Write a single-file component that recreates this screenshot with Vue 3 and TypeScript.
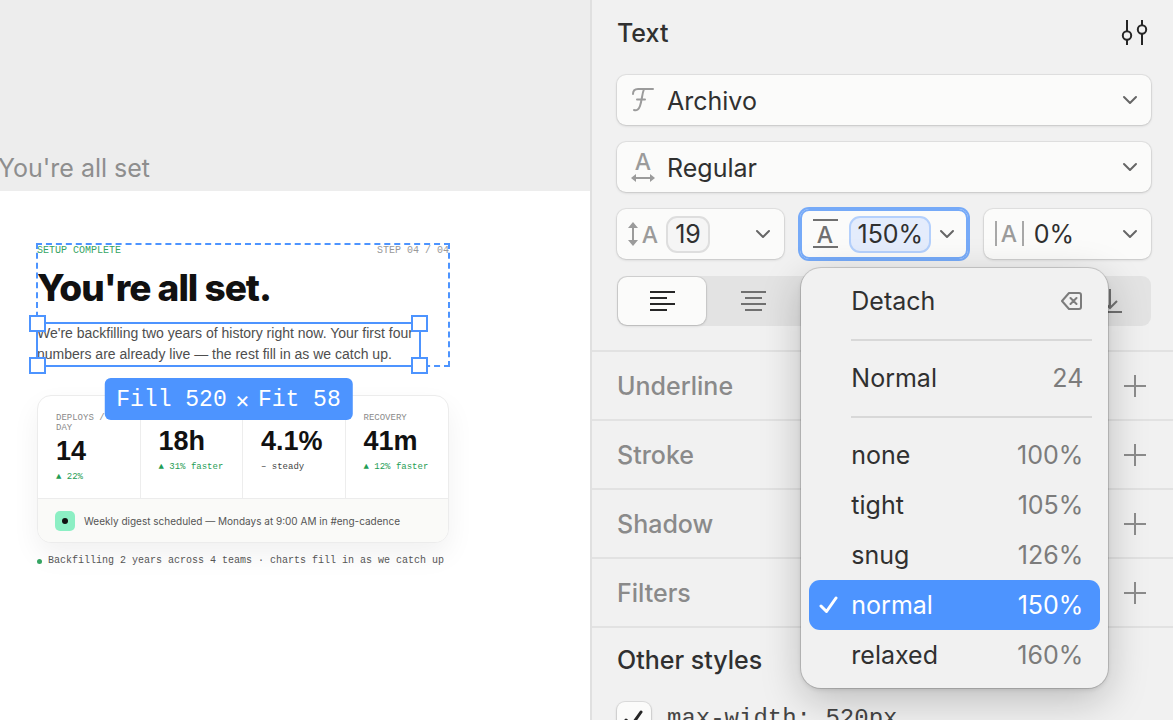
<script setup lang="ts">
import { ref } from 'vue'

interface Stat {
  label: string
  value: string
  delta: string
  up: boolean
}

interface Preset {
  name: string
  value: string
}

const stats: Stat[] = [
  { label: 'Deploys / day', value: '14', delta: '▲ 22%', up: true },
  { label: 'Lead time', value: '18h', delta: '▲ 31% faster', up: true },
  { label: 'Fail rate', value: '4.1%', delta: '– steady', up: false },
  { label: 'Recovery', value: '41m', delta: '▲ 12% faster', up: true },
]

const presets: Preset[] = [
  { name: 'none', value: '100%' },
  { name: 'tight', value: '105%' },
  { name: 'snug', value: '126%' },
  { name: 'normal', value: '150%' },
  { name: 'relaxed', value: '160%' },
]

const sections: string[] = ['Underline', 'Stroke', 'Shadow', 'Filters']

const horizontal = [
  { name: 'left', d: 'M1 2H26M1 8H18M1 14H26M1 20H18' },
  { name: 'center', d: 'M1 2H26M5 8H22M1 14H26M5 20H22' },
  { name: 'right', d: 'M1 2H26M9 8H26M1 14H26M9 20H26' },
]
const vertical = [
  { name: 'top', d: 'M1 1H25M13 23V6M6 12L13 5L20 12' },
  { name: 'middle', d: 'M1 12H25M13 0V8M13 24V16' },
  { name: 'bottom', d: 'M1 23H25M13 0V18M6 12L13 19L20 12' },
]

const align = ref('left')
const family = ref('Archivo')
const weight = ref('Regular')
const fontSize = ref('19')
const lineHeight = ref('150%')
const tracking = ref('0%')
const maxWidthOn = ref(true)
</script>

<template>
  <div class="app">
    <main class="canvas">
      <p class="frame-name">You're all set</p>
      <article class="frame">
        <header class="intro">
          <div class="eyebrow">
            <span class="done">SETUP COMPLETE</span>
            <span class="step">STEP 04 / 04</span>
          </div>
          <h1>You're all set.</h1>
          <div class="lead">
            <p>We're backfilling two years of history right now. Your first four numbers are already live — the rest fill in as we catch up.</p>
            <div class="selection">
              <i class="handle tl"></i><i class="handle tr"></i>
              <i class="handle bl"></i><i class="handle br"></i>
            </div>
            <div class="size-badge"><span>Fill 520</span><span class="times">×</span><span>Fit 58</span></div>
          </div>
          <div class="parent-outline"></div>
        </header>

        <section class="card">
          <div class="stats">
            <div v-for="s in stats" :key="s.label" class="stat">
              <span class="stat-label">{{ s.label }}</span>
              <strong>{{ s.value }}</strong>
              <span class="delta" :class="{ up: s.up }">{{ s.delta }}</span>
            </div>
          </div>
          <div class="digest">
            <span class="digest-icon"></span>
            <span>Weekly digest scheduled — Mondays at 9:00 AM in #eng-cadence</span>
          </div>
        </section>
        <p class="status"><i></i>Backfilling 2 years across 4 teams · charts fill in as we catch up</p>
      </article>
    </main>

    <aside class="inspector">
      <section class="text-section">
        <div class="section-head">
          <h2>Text</h2>
          <button class="plain" aria-label="Text settings">
            <svg width="28" height="28" viewBox="0 0 28 28" fill="none" stroke="#262626" stroke-width="2">
              <path d="M6 1V12M6 21V26M21 1V6M21 15V26" />
              <circle cx="6" cy="16.500" r="4.200" /><circle cx="21" cy="10.500" r="4.200" />
            </svg>
          </button>
        </div>

        <div class="field">
          <svg class="lead-icon" width="26" height="28" viewBox="0 0 26 28" fill="none" stroke="#9b9b9b" stroke-width="2" stroke-linecap="round" stroke-linejoin="round">
            <path d="M3 8C3 5 5 3 8 3H23M14 3C12 8 12 14 10 20C9 23 7 25 4 24M7 13.500H15" />
          </svg>
          <select v-model="family" aria-label="Font family">
            <option>Archivo</option>
          </select>
          <svg class="chevron" width="16" height="10" viewBox="0 0 16 10"><path d="M2 2L8 8L14 2" /></svg>
        </div>

        <div class="field">
          <svg class="lead-icon" width="26" height="32" viewBox="0 0 26 32" fill="none" stroke="#9b9b9b" stroke-width="2">
            <text x="13" y="19" class="glyph light">A</text>
            <path d="M5 27H21" />
            <path d="M1 27L6 23V31ZM25 27L20 23V31Z" fill="#9b9b9b" stroke="none" />
          </svg>
          <select v-model="weight" aria-label="Font weight">
            <option>Regular</option>
          </select>
          <svg class="chevron" width="16" height="10" viewBox="0 0 16 10"><path d="M2 2L8 8L14 2" /></svg>
        </div>

        <div class="metrics">
          <div class="field">
            <svg class="metric-icon" width="32" height="28" viewBox="0 0 32 28" fill="none" stroke="#9b9b9b" stroke-width="2">
              <path d="M6 6V22" />
              <path d="M6 2L1 8H11ZM6 26L1 20H11Z" fill="#9b9b9b" stroke="none" />
              <text x="23" y="23" class="glyph light">A</text>
            </svg>
            <input v-model="fontSize" class="token size" aria-label="Font size" />
            <button class="plain chevron-button" aria-label="Font size presets">
              <svg width="16" height="10" viewBox="0 0 16 10"><path d="M2 2L8 8L14 2" /></svg>
            </button>
          </div>

          <div class="field active">
            <svg class="metric-icon" width="28" height="32" viewBox="0 0 28 32" fill="none" stroke="#707070" stroke-width="2">
              <path d="M1 2H26M1 29H26" />
              <text x="13" y="25" class="glyph dark">A</text>
            </svg>
            <input v-model="lineHeight" class="token leading" aria-label="Line height" />
            <button class="plain chevron-button" aria-label="Line height presets" aria-expanded="true">
              <svg width="16" height="10" viewBox="0 0 16 10"><path d="M2 2L8 8L14 2" /></svg>
            </button>

            <div class="menu" role="menu">
              <button role="menuitem">
                <span>Detach</span>
                <svg width="22" height="20" viewBox="0 0 22 20" fill="none" stroke="#7c7c7c" stroke-width="2" stroke-linejoin="round" stroke-linecap="round">
                  <path d="M8 2H18Q20 2 20 4V16Q20 18 18 18H8L1 10ZM9.500 7L15.500 13M15.500 7L9.500 13" />
                </svg>
              </button>
              <hr />
              <button role="menuitem"><span>Normal</span><span class="amount">24</span></button>
              <hr />
              <button
                v-for="p in presets"
                :key="p.name"
                role="menuitemradio"
                :aria-checked="lineHeight === p.value"
                :class="{ checked: lineHeight === p.value }"
                @click="lineHeight = p.value"
              >
                <svg v-if="lineHeight === p.value" class="tick" width="20" height="20" viewBox="0 0 20 20">
                  <path d="M2 11L7.500 16.500L17 3" />
                </svg>
                <span>{{ p.name }}</span><span class="amount">{{ p.value }}</span>
              </button>
            </div>
          </div>

          <div class="field">
            <svg class="metric-icon" width="32" height="28" viewBox="0 0 32 28" fill="none" stroke="#a8a8a8" stroke-width="2">
              <path d="M2 1V26M29 1V26" />
              <text x="15" y="22" class="glyph light">A</text>
            </svg>
            <input v-model="tracking" class="bare" aria-label="Letter spacing" />
            <button class="plain chevron-button" aria-label="Letter spacing presets">
              <svg width="16" height="10" viewBox="0 0 16 10"><path d="M2 2L8 8L14 2" /></svg>
            </button>
          </div>
        </div>

        <div class="alignment">
          <div class="segments wide">
            <button
              v-for="a in horizontal"
              :key="a.name"
              :class="{ on: align === a.name }"
              :aria-label="`Align ${a.name}`"
              :aria-pressed="align === a.name"
              @click="align = a.name"
            >
              <svg width="27" height="22" viewBox="0 0 27 22"><path :d="a.d" /></svg>
            </button>
          </div>
          <div class="segments">
            <button v-for="a in vertical" :key="a.name" :aria-label="`Align ${a.name}`">
              <svg width="26" height="24" viewBox="0 0 26 24"><path :d="a.d" /></svg>
            </button>
          </div>
        </div>
      </section>

      <section v-for="name in sections" :key="name" class="empty-section">
        <h2>{{ name }}</h2>
        <button class="plain" :aria-label="`Add ${name}`">
          <svg width="22" height="22" viewBox="0 0 22 22" fill="none" stroke="#8c8c8c" stroke-width="2">
            <path d="M11 0V22M0 11H22" />
          </svg>
        </button>
      </section>

      <section class="other">
        <h2>Other styles</h2>
        <label>
          <span class="box">
            <input v-model="maxWidthOn" type="checkbox" />
            <svg v-if="maxWidthOn" width="20" height="20" viewBox="0 0 20 20"><path d="M2 11L7.500 16.500L17 3" /></svg>
          </span>
          <code>max-width: 520px</code>
        </label>
      </section>
    </aside>
  </div>
</template>

<style>
html,
body {
  overflow: hidden;
}
</style>

<style scoped>
.app {
  --blue: #4d94ff;
  --mono: "Liberation Mono", monospace;
  display: grid;
  grid-template-columns: minmax(0, 1fr) 583px;
  height: 100vh;
  overflow: hidden;
  font-family: Inter, "Liberation Sans", sans-serif;
  color: #303030;
}

h1,
h2,
p {
  margin: 0;
}

button,
input,
select {
  font: inherit;
  color: inherit;
  margin: 0;
  box-sizing: border-box;
}

svg {
  display: block;
  flex: none;
}

/* Canvas */
.canvas {
  display: flex;
  flex-direction: column;
  background: #ededed;
  overflow: hidden;
}

.frame-name {
  padding-top: 152px;
  padding-bottom: 7px;
  margin-left: -2px;
  font-size: 25px;
  line-height: 32px;
  color: #8e8e8e;
  white-space: nowrap;
}

.frame {
  flex: 1;
  background: #fff;
  padding: 53px 0 0 37px;
}

.intro {
  position: relative;
  width: 412px;
}

.eyebrow {
  display: flex;
  justify-content: space-between;
  font: 10px/14px var(--mono);
}

.done {
  color: #35a463;
}

.step {
  color: #999;
}

h1 {
  margin: 10px 0 15px;
  font: 800 37px/40px Inter, sans-serif;
  letter-spacing: -1px;
  color: #111;
}

.lead {
  position: relative;
  width: 383px;
  padding-bottom: 1px;
}

.lead p {
  font: 14px/21px "Liberation Sans", sans-serif;
  color: #4e4e4e;
}

.selection {
  position: absolute;
  inset: -1px;
  border: 2px solid var(--blue);
}

.handle {
  position: absolute;
  width: 13px;
  height: 13px;
  border: 2px solid var(--blue);
  background: #fff;
}

.tl,
.tr {
  top: -9px;
}

.bl,
.br {
  bottom: -9px;
}

.tl,
.bl {
  left: -9px;
}

.tr,
.br {
  right: -9px;
}

.parent-outline {
  position: absolute;
  inset: -1px;
  border: 2px dashed var(--blue);
}

.selection,
.size-badge {
  z-index: 1;
}

.size-badge {
  position: absolute;
  top: calc(100% + 12px);
  left: 50%;
  transform: translateX(-50%);
  display: flex;
  align-items: center;
  gap: 8px;
  padding: 3px 12px 0;
  border-radius: 6px;
  background: var(--blue);
  color: #fff;
  font: 23px/39px var(--mono);
  white-space: pre;
}

.times {
  font-family: Inter, sans-serif;
}

.card {
  width: 410px;
  margin-top: 29px;
  border: 1px solid #ececec;
  border-radius: 14px;
  overflow: hidden;
  background: #fff;
  box-shadow: 0 12px 28px rgba(0, 0, 0, 0.06);
}

.stats {
  display: grid;
  grid-template-columns: repeat(4, 1fr);
  min-height: 102px;
}

.stat {
  display: flex;
  flex-direction: column;
  padding: 17px 16px 0 18px;
  border-right: 1px solid #ededed;
}

.stat:last-child {
  border-right: 0;
}

.stat-label {
  font: 9px/10px var(--mono);
  color: #8a8a8a;
  text-transform: uppercase;
}

.stat strong {
  font: bold 27px/28px "Liberation Sans", sans-serif;
  margin: 4px 0 7px;
  color: #111;
}

.delta {
  font: 9px/11px var(--mono);
  color: #444;
  white-space: nowrap;
}

.delta.up {
  color: #1f9d55;
}

.digest {
  display: flex;
  align-items: center;
  gap: 9px;
  height: 43px;
  padding-left: 17px;
  border-top: 1px solid #ececec;
  background: #fafaf8;
  font-size: 10px;
  color: #555;
  white-space: nowrap;
}

.digest-icon {
  display: grid;
  place-items: center;
  width: 20px;
  height: 20px;
  border-radius: 5px;
  background: #8cefc4;
}

.digest-icon::before {
  content: "";
  width: 6px;
  height: 6px;
  border-radius: 50%;
  background: #111;
}

.status {
  display: flex;
  align-items: center;
  gap: 6px;
  margin-top: 12px;
  font: 10px/12px var(--mono);
  color: #555;
  white-space: nowrap;
}

.status i {
  width: 5px;
  height: 5px;
  border-radius: 50%;
  background: #35a463;
}

/* Inspector */
.inspector {
  border-left: 2px solid #e0e0e0;
  background: #f1f1f1;
  font-size: 25px;
}

h2 {
  font-size: 25px;
  line-height: 32px;
  font-weight: 500;
}

.plain {
  display: grid;
  place-items: center;
  padding: 0;
  border: 0;
  background: none;
}

.text-section {
  display: flex;
  flex-direction: column;
  gap: 17px;
  padding: 17px 22px 24px 25px;
}

.section-head {
  display: flex;
  align-items: center;
  justify-content: space-between;
  padding: 0 2px 9px 0;
}

.field {
  position: relative;
  display: flex;
  align-items: center;
  height: 50px;
  border-radius: 9px;
  background: #fbfbfa;
  box-shadow: 0 0 0 1px rgba(0, 0, 0, 0.06), 0 1px 3px rgba(0, 0, 0, 0.14);
}

.lead-icon {
  position: absolute;
  left: 13px;
  pointer-events: none;
}

.field select {
  appearance: none;
  width: 100%;
  height: 100%;
  padding: 2px 44px 0 50px;
  border: 0;
  background: none;
  font-size: 25px;
  outline: none;
}

.chevron {
  position: absolute;
  right: 13px;
  pointer-events: none;
}

.chevron path,
.chevron-button path {
  fill: none;
  stroke: #666;
  stroke-width: 2;
  stroke-linecap: round;
  stroke-linejoin: round;
}

.glyph {
  stroke: none;
  font-family: Inter, sans-serif;
  font-weight: 500;
  font-size: 23px;
  text-anchor: middle;
}

.glyph.light {
  fill: #9b9b9b;
}

.glyph.dark {
  fill: #707070;
}

.metrics {
  display: grid;
  grid-template-columns: repeat(3, minmax(0, 1fr));
  gap: 16px;
}

.metrics .field {
  padding: 0 13px 0 10px;
  gap: 7px;
}

.metrics .active {
  padding-left: 12px;
  gap: 9px;
  box-shadow: 0 0 0 2px #76aaf8, inset 0 0 0 2px #76aaf8;
  z-index: 2;
}

.chevron-button {
  margin-left: auto;
}

.token {
  height: 37px;
  padding: 0;
  border: 2px solid #dedede;
  border-radius: 11px;
  background: #f5f5f5;
  text-align: center;
  outline: none;
}

.size {
  width: 44px;
}

.leading {
  width: 82px;
  border-color: #b4d0fc;
  background: #e4ecfc;
}

.active .chevron-button {
  margin-left: -1px;
}

.bare {
  width: 60px;
  padding: 0 0 0 1px;
  border: 0;
  background: none;
  outline: none;
}

.menu {
  position: absolute;
  top: calc(100% + 9px);
  left: 1px;
  width: 307px;
  box-sizing: border-box;
  padding: 8px;
  border-radius: 20px;
  background: #f1f1f1;
  box-shadow: 0 0 0 1px rgba(0, 0, 0, 0.14), 0 2px 4px rgba(0, 0, 0, 0.1), 0 12px 40px rgba(0, 0, 0, 0.22);
}

.menu button {
  position: relative;
  display: flex;
  align-items: center;
  justify-content: space-between;
  width: 100%;
  height: 50px;
  padding: 0 17px 0 42px;
  border: 0;
  border-radius: 11px;
  background: none;
  text-align: left;
}

.menu hr {
  height: 2px;
  margin: 13px 8px 12px 42px;
  border: 0;
  background: #d8d8d8;
}

.amount {
  color: #7c7c7c;
}

.menu .checked {
  background: var(--blue);
  color: #fff;
}

.checked .amount {
  color: #fff;
}

.tick {
  position: absolute;
  left: 10px;
}

.tick path {
  fill: none;
  stroke: #fff;
  stroke-width: 3;
  stroke-linecap: round;
  stroke-linejoin: round;
}

.alignment {
  display: flex;
  gap: 16px;
}

.segments {
  flex: 9;
  display: flex;
  gap: 3px;
  padding: 1px;
  border-radius: 9px;
  background: #e3e3e3;
}

.segments.wide {
  flex: 10;
}

.segments button {
  flex: 1;
  display: grid;
  place-items: center;
  height: 48px;
  padding: 0;
  border: 0;
  border-radius: 9px;
  background: none;
}

.segments path {
  fill: none;
  stroke: #707070;
  stroke-width: 2;
}

.segments .on {
  background: #fbfbfa;
  box-shadow: 0 0 0 1px rgba(0, 0, 0, 0.07), 0 1px 3px rgba(0, 0, 0, 0.14);
}

.segments .on path {
  stroke: #262626;
}

.empty-section,
.other {
  border-top: 2px solid #e2e2e2;
  padding: 0 27px 0 25px;
}

.empty-section {
  display: flex;
  align-items: center;
  justify-content: space-between;
  height: 67px;
}

.empty-section h2 {
  color: #8a8a8a;
}

.other {
  padding-top: 16px;
}

.other label {
  display: flex;
  align-items: center;
  gap: 16px;
  margin-top: 26px;
}

.box {
  position: relative;
  display: grid;
  place-items: center;
}

.box input {
  appearance: none;
  width: 34px;
  height: 34px;
  border-radius: 8px;
  background: #fbfbfa;
  box-shadow: 0 0 0 1px rgba(0, 0, 0, 0.07), 0 1px 3px rgba(0, 0, 0, 0.2);
}

.box svg {
  position: absolute;
  pointer-events: none;
}

.box path {
  fill: none;
  stroke: #262626;
  stroke-width: 3;
  stroke-linecap: round;
}

code {
  font: 24px/34px var(--mono);
  color: #444;
}
</style>
